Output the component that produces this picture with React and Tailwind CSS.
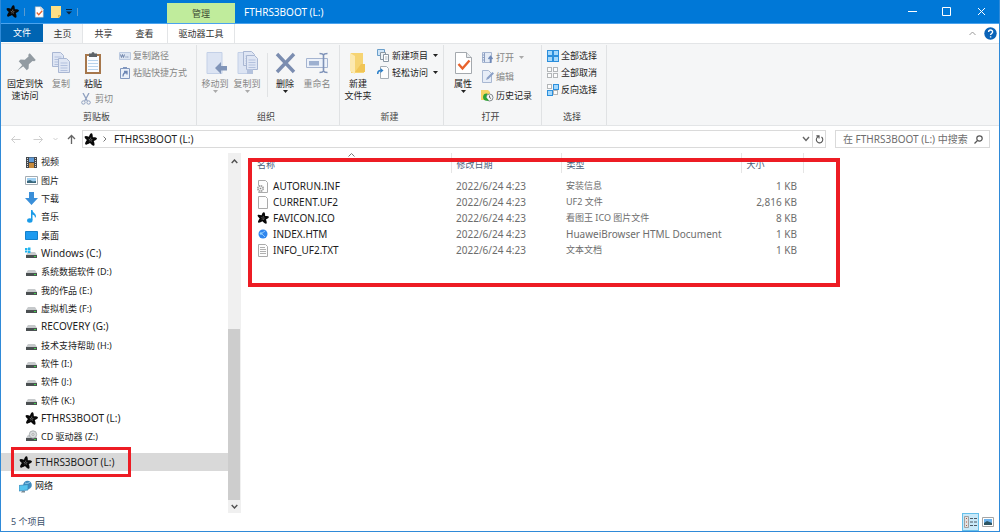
import { useState } from "react";

const cx = (...c) => c.filter(Boolean).join(" ");

/* ---------- icons ---------- */

function StarIcon({ className = "size-[13px]" }) {
  return (
    <svg viewBox="0 0 26 26" className={cx("shrink-0", className)}>
      <g transform="rotate(9 13 13)">
        <path
          d="M13 .5c2 0 3.200 3 3.900 7.300 4.600-.9 7.900-.8 8.500 1 .6 1.900-1.900 4-5.500 6.300 2.400 4 3.500 7.700 2 8.900-1.600 1.200-5-.6-8.900-3.700-3.700 3.200-7.100 5.100-8.700 3.900-1.600-1.200-.5-4.900 1.700-9.200C2.400 12.800 0 10.700.6 8.800c.6-1.800 3.900-1.900 8.500-1C9.800 3.500 11 .5 13 .5z"
          fill="#080808"
        />
        <path
          d="M13 9v3.500M9.300 12.800l2.700.8M16.700 12.600l-2.600 1M11.500 17l1-2.300M15.300 17l-1.200-2.300"
          stroke="#b5b5b5"
          strokeWidth="1"
          fill="none"
        />
      </g>
    </svg>
  );
}

function Caret({ className = "text-[#333]" }) {
  return (
    <svg viewBox="0 0 5 3" className={cx("h-[3px] w-[5px] shrink-0", className)}>
      <path d="M0 0h5L2.500 3z" fill="currentColor" />
    </svg>
  );
}

function FolderIcon({ className }) {
  return (
    <svg viewBox="0 0 24 24" className={className}>
      <path d="M5 2h12v16h1v4H5z" fill="#f6d473" />
      <path d="M15 13h4v8H9z" fill="#f1c555" />
      <path d="M4 2l5 3v18l-5-3z" fill="#fce9b0" />
    </svg>
  );
}

function PinIcon() {
  return (
    <svg viewBox="0 0 24 24" className="size-6">
      <g transform="rotate(48 12 12)" fill="#929ba2">
        <path d="M8 2h9v2l-1.500 1v5l3 3v2.500h-12V13l3-3V5L8 4z" />
        <path d="M11.600 15h1.800l-.9 8z" />
      </g>
    </svg>
  );
}

function Page({ x, y }) {
  return (
    <g transform={`translate(${x} ${y})`}>
      <path d="M.5.500h8l3 3v11H.5z" fill="#dfe6f4" stroke="#a9b7d3" />
      <path d="M2.500 5h7M2.500 7.500h7M2.500 10h7M2.500 12.500h7" stroke="#b3c1de" />
    </g>
  );
}

function CopyIcon() {
  return (
    <svg viewBox="0 0 24 24" className="size-6">
      <Page x={3} y={1} />
      <Page x={9} y={7} />
    </svg>
  );
}

function PasteIcon() {
  return (
    <svg viewBox="0 0 24 24" className="size-6">
      <path d="M4 3h16v20H4z" fill="#a6774c" />
      <path d="M6 5h12v16H6z" fill="#fafcff" />
      <path d="M8 2.500h2.500a1.500 1.500 0 013 0H16V6H8z" fill="#5d6368" />
      <path d="M7 9.500h10M7 12.500h10M7 15.500h10M7 18.500h10" stroke="#b8d3ec" />
    </svg>
  );
}

function ScissorsIcon() {
  return (
    <svg viewBox="0 0 10 12" className="h-3 w-[10px] shrink-0" fill="none" stroke="#8fa0bf">
      <path d="M2 0l4.300 8M8 0L3.700 8" strokeWidth="1.300" />
      <circle cx="2.400" cy="9.500" r="1.700" />
      <circle cx="7.600" cy="9.500" r="1.700" />
    </svg>
  );
}

function PathIcon() {
  return (
    <svg viewBox="0 0 12 12" className="size-3 shrink-0">
      <path d="M.5 2.500h11v7H.5z" fill="#dbe4f1" stroke="#bccae0" />
      <path d="M1.500 4.500l1 3 1-3 1 3 1-3M6.500 7h1M8.300 7h1" stroke="#6f84aa" fill="none" />
    </svg>
  );
}

function ShortcutIcon() {
  return (
    <svg viewBox="0 0 12 12" className="size-3 shrink-0">
      <path d="M1.500 1.500h9v10h-9z" fill="#eaf0f9" stroke="#8298bf" />
      <path d="M4 0h4v2H4z" fill="#8298bf" />
      <path d="M4 9.500c0-3 1-4 3.500-4M5 4.500h3v3" stroke="#6c86b4" fill="none" strokeWidth="1.300" />
    </svg>
  );
}

function MoveToIcon() {
  return (
    <svg viewBox="0 0 24 24" className="size-6">
      <path d="M4 1.500h15v21H4z" fill="#dce4f3" stroke="#c3d0e7" />
      <path d="M12 17l6-6v4h6v4.500h-6v3.500z" fill="#8094b8" />
    </svg>
  );
}

function CopyToIcon() {
  return (
    <svg viewBox="0 0 24 24" className="size-6">
      <path d="M3 1.500h13v21H3z" fill="#dce4f3" stroke="#c3d0e7" />
      <Page x={8} y={0} />
      <Page x={11} y={4} />
      <path d="M12 18h6v5h-6z" fill="#b4c2dd" />
    </svg>
  );
}

function DeleteIcon() {
  return (
    <svg viewBox="0 0 24 24" className="size-6">
      <path d="M4 3l17 18M21 3L4 21" stroke="#7b8db0" strokeWidth="3.400" />
    </svg>
  );
}

function RenameIcon() {
  return (
    <svg viewBox="0 0 24 24" className="size-6" fill="none">
      <path d="M1.500 7.500h21v9h-21z" fill="#edf2fa" stroke="#a5b4d0" />
      <path d="M4 10h10v4.500H4z" fill="#9db0d0" />
      <path d="M14.500 2.500c2 0 3.500.5 4 1.500.5-1 2-1.500 4-1.500M18.500 4v16M14.500 21.500c2 0 3.500-.5 4-1.500.5 1 2 1.500 4 1.500" stroke="#7e92b8" strokeWidth="1.600" />
    </svg>
  );
}

function NewItemIcon() {
  return (
    <svg viewBox="0 0 13 13" className="size-[13px] shrink-0" stroke="#8a97a3">
      <path d="M.5.500h7v6h-7z" fill="#cfe4f6" stroke="#6a9fca" />
      <path d="M3.500 3.500h5v7h-5z" fill="#eef3f8" />
      <path d="M6.500 5.500h5v7h-5z" fill="#fff" />
      <path d="M8 8h2.500M8 10h2.500" stroke="#aeb7c0" />
    </svg>
  );
}

function EasyAccessIcon() {
  return (
    <svg viewBox="0 0 13 13" className="size-[13px] shrink-0">
      <path d="M3.500.500h6l2 2v10h-8z" fill="#fdfdfd" stroke="#a6aeb5" />
      <path d="M.7 8c0-2.500 1-3.500 3-3.500" stroke="#2a7fc9" fill="none" strokeWidth="1.500" />
      <path d="M3.500 2l3 2.500-3 2.500z" fill="#2a7fc9" />
    </svg>
  );
}

function PropertiesIcon({ className = "size-6" }) {
  return (
    <svg viewBox="0 0 24 24" className={className}>
      <path d="M4.500 1.500h11l5 5v16h-16z" fill="#fff" stroke="#a4a9ae" />
      <path d="M15.500 1.500v5h5" fill="#e6e9ec" stroke="#a4a9ae" />
      <path d="M7.500 13l4 4.500 7-8" stroke="#e8622c" strokeWidth="2.400" fill="none" />
    </svg>
  );
}

function OpenIcon() {
  return (
    <svg viewBox="0 0 13 13" className="size-[13px] shrink-0">
      <path d="M1.500 1.500h9v10h-9z" fill="#e4ebf6" stroke="#a5b5d0" />
      <path d="M3.500 2v9M1.500 4h2M1.500 6.500h2M1.500 9h2" stroke="#8c9fc1" />
      <path d="M9.500 12V6M7.500 8l2-2.500 2 2.500" stroke="#6f89b8" fill="none" strokeWidth="1.500" />
    </svg>
  );
}

function EditIcon() {
  return (
    <svg viewBox="0 0 13 13" className="size-[13px] shrink-0">
      <path d="M1.500.500h6l3 3v9h-9z" fill="#e7edf7" stroke="#a9b8d2" />
      <path d="M5 10l1-2.500L11.500 2l1.500 1.500L7.500 9z" fill="#8ba0c6" />
    </svg>
  );
}

function HistoryIcon() {
  return (
    <svg viewBox="0 0 13 13" className="size-[13px] shrink-0">
      <path d="M0 1h7l2 2v8H0z" fill="#f5d464" />
      <circle cx="8.500" cy="8.500" r="3.500" fill="#f4f6f7" stroke="#84898d" />
      <path d="M8.500 6.500v2l1.500 1" stroke="#666" fill="none" />
      <path d="M2 8c.3-3 2-4 4.500-3.500L5 8l3 3.500C4 12.500 2 11 2 8z" fill="#2ca336" />
    </svg>
  );
}

function SelectIcon({ kind }) {
  const on = "#a5d8fb";
  const off = "#fcfcfc";
  const fills = {
    all: [on, on, on, on],
    none: [off, off, off, off],
    invert: [off, on, on, off],
  }[kind];
  const spots = [
    [1, 1],
    [7, 1],
    [1, 7],
    [7, 7],
  ];
  return (
    <svg viewBox="0 0 13 13" className="size-[13px] shrink-0">
      {spots.map(([x, y], i) => (
        <rect
          key={i}
          x={x + 0.5}
          y={y + 0.5}
          width={fills[i] === on ? 5 : 4}
          height={fills[i] === on ? 5 : 4}
          fill={fills[i]}
          stroke={fills[i] === on ? "#2c8fdc" : "#b3b6b8"}
        />
      ))}
    </svg>
  );
}

function DriveBody() {
  return (
    <>
      <path d="M3 5h7l2 3H1z" fill="#c6c9cb" />
      <path d="M1 8h11v3H1z" fill="#4b5052" />
      <path d="M9 9h2v1H9z" fill="#3fd04a" />
    </>
  );
}

function NavIcon({ kind }) {
  if (kind === "star") return <StarIcon />;
  return (
    <svg viewBox="0 0 13 13" className="size-[13px] shrink-0">
      {kind === "video" && (
        <>
          <path d="M1 1h11v11H1z" fill="#45484c" />
          <path d="M4 1.500h5v4.500H4z" fill="#5f9bd8" />
          <path d="M4 7h5v5H4z" fill="#c78a3b" />
          <path d="M2.500 2v9.500M10.500 2v9.500" stroke="#d6d6d6" strokeDasharray="1 1" />
        </>
      )}
      {kind === "image" && (
        <>
          <path d="M.5 2.500h12v8H.5z" fill="#fff" stroke="#a3acb3" />
          <path d="M2 4h9v5H2z" fill="#9fd0f2" />
          <path d="M2 7l3-1 3 1.500 3-.5v2H2z" fill="#39677c" />
        </>
      )}
      {kind === "download" && <path d="M4 0h5v6h4l-6.500 7L0 6h4z" fill="#3a8fd9" />}
      {kind === "music" && (
        <>
          <path d="M6 0h1.500c0 3 3.500 3 3.500 6.500L10 8c0-2.500-1-3-2.500-3.500V10H6z" fill="#1a9be8" />
          <ellipse cx="4.800" cy="10.500" rx="2.700" ry="2.200" fill="#1a9be8" />
        </>
      )}
      {kind === "desktop" && <path d="M.5 2.500h12v8H.5z" fill="#1e9bf0" stroke="#1480cb" />}
      {kind === "drive" && <DriveBody />}
      {kind === "windows" && (
        <>
          <DriveBody />
          <path d="M0 1h2.500v2H0zM3 .5h2.500V3H3zM0 3.500h2.500v2H0zM3 3.500h2.500V6H3z" fill="#20b4ee" />
        </>
      )}
      {kind === "cd" && (
        <>
          <DriveBody />
          <circle cx="8" cy="4.500" r="3.700" fill="#d9dcde" stroke="#9ea3a6" strokeWidth=".8" />
          <circle cx="8" cy="4.500" r="1" fill="#fff" stroke="#888" strokeWidth=".6" />
        </>
      )}
      {kind === "network" && (
        <>
          <circle cx="8.500" cy="5" r="4.300" fill="#3f8cc0" />
          <path d="M6 3c2 1 4 0 5-1" stroke="#9fd2ee" fill="none" />
          <path d="M0 5.500l9-1V10l-9 1z" fill="#56c3ee" stroke="#3784b4" strokeWidth=".7" />
          <path d="M3 11h3v1.500H2z" fill="#7b8b95" />
        </>
      )}
    </svg>
  );
}

function FileIcon({ kind }) {
  if (kind === "star") return <StarIcon className="size-3" />;
  if (kind === "html")
    return (
      <svg viewBox="0 0 12 12" className="size-3 shrink-0">
        <circle cx="6" cy="6" r="4.500" fill="#2f86ee" />
        <path d="M4.500 5.500L8 3M4.500 5.500L8 9" stroke="#8cc4fb" fill="none" />
        <circle cx="4" cy="5.500" r="1.300" fill="#8fd0ff" />
      </svg>
    );
  return (
    <svg viewBox="0 0 12 13" className="h-[13px] w-3 shrink-0">
      <path d="M1.500.500h7l2 2v10h-9z" fill="#fdfdfd" stroke="#aaa" />
      {kind === "text" && <path d="M3 3.500h5M3 5.500h6M3 7.500h6M3 9.500h6" stroke="#b0b0b0" />}
      {kind === "inf" && (
        <>
          <circle cx="3.500" cy="8.500" r="3.500" fill="#fdfdfd" />
          <circle cx="3.500" cy="8.500" r="2.700" fill="#eee" stroke="#999" strokeWidth="1.500" strokeDasharray="1.500 .6" />
          <circle cx="3.500" cy="8.500" r=".8" fill="#888" />
        </>
      )}
    </svg>
  );
}

/* ---------- ribbon ---------- */

function BigButton({ icon, lines, dim, caret, wide }) {
  return (
    <button
      type="button"
      className={cx(
        "flex flex-col items-center pt-[6px] text-[9px] leading-3 whitespace-nowrap",
        wide ? "w-10" : "w-8",
        dim ? "text-[#868686]" : "text-[#222]",
      )}
    >
      {icon}
      <span className="mt-[3px]">
        {lines.map((l) => (
          <span key={l} className="block">
            {l}
          </span>
        ))}
      </span>
      {caret && <Caret className={dim ? "text-[#aaa]" : "text-[#222]"} />}
    </button>
  );
}

function SmallButton({ icon, label, dim, caret, tall }) {
  return (
    <button
      type="button"
      className={cx(
        "flex items-center gap-px text-[9px] whitespace-nowrap",
        tall ? "h-[19px]" : "h-[17px]",
        dim ? "text-[#868686]" : "text-[#222]",
      )}
    >
      {icon}
      <span className="pl-px">{label}</span>
      {caret && (
        <span className="pl-1">
          <Caret className={dim ? "text-[#aaa]" : "text-[#222]"} />
        </span>
      )}
    </button>
  );
}

function RibbonGroup({ label, className, bodyClass, children }) {
  return (
    <section aria-label={label} className={cx("flex shrink-0 flex-col py-px", className)}>
      <div className="flex flex-1 flex-col border-r border-[#e0e2e4]">
        <div className={cx("flex h-16 items-start", bodyClass)}>{children}</div>
        <div className="pr-1 text-center text-[9px] leading-4 text-[#444]">{label}</div>
      </div>
    </section>
  );
}

function Ribbon() {
  return (
    <div className="flex h-[83px] border-y border-[#e3e5e7] bg-[#f5f6f7]">
      <RibbonGroup label="剪贴板" className="w-[196px]" bodyClass="pl-1">
        <BigButton icon={<PinIcon />} lines={["固定到快", "速访问"]} wide />
        <BigButton icon={<CopyIcon />} lines={["复制"]} dim />
        <div className="w-[42px]">
          <BigButton icon={<PasteIcon />} lines={["粘贴"]} />
          <button type="button" className="mt-[3px] flex items-center gap-1 pl-1 text-[9px] leading-3 whitespace-nowrap text-[#868686]">
            <ScissorsIcon />
            剪切
          </button>
        </div>
        <div className="pt-[2px]">
          <SmallButton icon={<PathIcon />} label="复制路径" dim />
          <SmallButton icon={<ShortcutIcon />} label="粘贴快捷方式" dim />
        </div>
      </RibbonGroup>

      <RibbonGroup label="组织" className="w-[143px]" bodyClass="pl-[2px]">
        <BigButton icon={<MoveToIcon />} lines={["移动到"]} dim caret />
        <BigButton icon={<CopyToIcon />} lines={["复制到"]} dim caret />
        <div className="mt-2 mr-px ml-1 h-11 w-px bg-[#e0e2e4]" />
        <BigButton icon={<DeleteIcon />} lines={["删除"]} caret />
        <BigButton icon={<RenameIcon />} lines={["重命名"]} dim />
      </RibbonGroup>

      <RibbonGroup label="新建" className="w-[104px]" bodyClass="pl-[2px]">
        <BigButton icon={<FolderIcon className="size-6" />} lines={["新建", "文件夹"]} />
        <div className="pt-[2px] pl-[3px]">
          <SmallButton icon={<NewItemIcon />} label="新建项目" caret />
          <SmallButton icon={<EasyAccessIcon />} label="轻松访问" caret />
        </div>
      </RibbonGroup>

      <RibbonGroup label="打开" className="w-[98px]" bodyClass="pl-[3px]">
        <BigButton icon={<PropertiesIcon />} lines={["属性"]} caret />
        <div className="pt-[3px] pl-[2px]">
          <SmallButton icon={<OpenIcon />} label="打开" dim caret tall />
          <SmallButton icon={<EditIcon />} label="编辑" dim tall />
          <SmallButton icon={<HistoryIcon />} label="历史记录" tall />
        </div>
      </RibbonGroup>

      <RibbonGroup label="选择" className="w-[65px]" bodyClass="pl-1">
        <div className="pt-[2px]">
          <SmallButton icon={<SelectIcon kind="all" />} label="全部选择" />
          <SmallButton icon={<SelectIcon kind="none" />} label="全部取消" />
          <SmallButton icon={<SelectIcon kind="invert" />} label="反向选择" />
        </div>
      </RibbonGroup>
    </div>
  );
}

/* ---------- window chrome ---------- */

function TitleBar() {
  return (
    <header className="flex h-6 items-stretch border-b border-[#4aa3ee] bg-[#0078d7]">
      <div className="flex w-[166px] shrink-0 items-center pl-[5px]">
        <StarIcon />
        <span className="ml-[5px] h-2 w-px bg-[#5b9bd0]" />
        <button type="button" aria-label="属性" className="ml-2">
          <PropertiesIcon className="size-3" />
        </button>
        <button type="button" aria-label="新建文件夹" className="ml-[5px]">
          <svg viewBox="0 0 12 12" className="size-3">
            <path d="M1 0h10v9l-2 3H1z" fill="#fbdf85" />
            <path d="M8 12V9h3z" fill="#d9b34d" />
          </svg>
        </button>
        <button type="button" aria-label="自定义快速访问工具栏" className="ml-1">
          <svg viewBox="0 0 6 6" className="size-[6px]">
            <path d="M0 .5h6" stroke="#0b2540" />
            <path d="M0 2.500h6L3 5.500z" fill="#0b2540" />
          </svg>
        </button>
        <span className="ml-[5px] h-2 w-px bg-[#5b9bd0]" />
      </div>
      <div className="mt-[3px] w-[68px] shrink-0 bg-[#c0ec9c] text-center text-[9px] leading-[22px] text-[#3c4a34]">管理</div>
      <h1 className="flex-1 pl-[9px] text-[10px] leading-6 text-white">FTHRS3BOOT (L:)</h1>
      <div className="flex text-white">
        <button type="button" aria-label="最小化" className="grid w-[34px] place-items-center">
          <svg viewBox="0 0 9 9" className="size-[9px]">
            <path d="M0 4.500h9" stroke="currentColor" />
          </svg>
        </button>
        <button type="button" aria-label="最大化" className="grid w-[34px] place-items-center">
          <svg viewBox="0 0 9 9" className="size-[9px]">
            <path d="M.5.500h8v8h-8z" stroke="currentColor" fill="none" />
          </svg>
        </button>
        <button type="button" aria-label="关闭" className="grid w-9 place-items-center">
          <svg viewBox="0 0 9 9" className="size-[9px]">
            <path d="M1 1l7 7M8 1L1 8" stroke="currentColor" />
          </svg>
        </button>
      </div>
    </header>
  );
}

function Tabs() {
  return (
    <nav className="flex h-[19px] items-stretch text-[9px] leading-[18px] text-[#333]">
      <button type="button" className="mb-px w-[42px] bg-[#0064b2] text-white">
        文件
      </button>
      <button type="button" className="w-10 border-r border-[#e3e5e7] bg-[#f5f6f7]">
        主页
      </button>
      <button type="button" className="w-[41px]">
        共享
      </button>
      <button type="button" className="w-[43px] pr-[2px]">
        查看
      </button>
      <button type="button" className="w-[68px] border-x border-[#e3e5e7]">
        驱动器工具
      </button>
      <span className="flex-1" />
      <button type="button" aria-label="折叠功能区" className="mr-2">
        <svg viewBox="0 0 7 5" className="h-[5px] w-[7px]" fill="none" stroke="#999">
          <path d="M.5 4l3-3 3 3" />
        </svg>
      </button>
      <button type="button" aria-label="帮助" className="mr-[2px]">
        <svg viewBox="0 0 13 13" className="size-[13px]" fill="none">
          <circle cx="6.500" cy="6.500" r="6.200" fill="#0a63b8" />
          <path d="M4.600 5c0-2.600 4-2.600 4 0 0 1.500-2 1.500-2 3M6.600 9.200v1.400" stroke="#fff" strokeWidth="1.400" />
        </svg>
      </button>
    </nav>
  );
}

function AddressRow() {
  const [query, setQuery] = useState("");

  return (
    <div className="flex items-center px-[9px] pt-1 pb-[5px]">
      <div className="flex w-[72px] shrink-0 items-center">
        <button type="button" aria-label="后退">
          <svg viewBox="0 0 11 9" className="h-[9px] w-[11px]" fill="none" stroke="#cfcfcf">
            <path d="M10.500 4.500H1.500M5 1L1.500 4.500 5 8" />
          </svg>
        </button>
        <button type="button" aria-label="前进" className="ml-3">
          <svg viewBox="0 0 11 9" className="h-[9px] w-[11px]" fill="none" stroke="#cfcfcf">
            <path d="M.5 4.500h9M6 1l3.500 3.500L6 8" />
          </svg>
        </button>
        <button type="button" aria-label="最近浏览的位置" className="ml-[9px]">
          <svg viewBox="0 0 5 4" className="h-1 w-[5px]" fill="none" stroke="#cfcfcf">
            <path d="M.5 1l2 2 2-2" />
          </svg>
        </button>
        <button type="button" aria-label="上移" className="ml-[9px]">
          <svg viewBox="0 0 9 10" className="h-[10px] w-[9px]" fill="none" stroke="#666" strokeWidth="1.300">
            <path d="M4.500 10V1.500M1 5l3.500-3.500L8 5" />
          </svg>
        </button>
      </div>

      <div className="flex h-[18px] flex-1 items-center border border-[#dadada] pl-px">
        <StarIcon />
        <svg viewBox="0 0 4 6" className="ml-[6px] h-[6px] w-1" fill="none" stroke="#777">
          <path d="M.5.500L3 3 .5 5.500" />
        </svg>
        <span className="flex-1 pl-[7px] text-[10px] leading-4 text-[#222]">FTHRS3BOOT (L:)</span>
        <button type="button" aria-label="以前的位置" className="px-[2px]">
          <svg viewBox="0 0 8 6" className="h-[6px] w-2" fill="none" stroke="#666" strokeWidth="1.400">
            <path d="M1 1l3 3.500L7 1" />
          </svg>
        </button>
        <button type="button" aria-label="刷新" className="grid h-4 w-[13px] place-items-center border-l border-[#dadada]">
          <svg viewBox="0 0 10 10" className="size-[9px]" fill="none" stroke="#555" strokeWidth="1.200">
            <path d="M7.200 2.200A3.600 3.600 0 115 1.500M1.500 1h3v3" />
          </svg>
        </button>
      </div>

      <div className="ml-[9px] flex h-[18px] w-[155px] items-center border border-[#dadada] pr-[6px] pl-[7px]">
        <input
          type="text"
          aria-label="搜索"
          value={query}
          onChange={(e) => setQuery(e.target.value)}
          placeholder="在 FTHRS3BOOT (L:) 中搜索"
          className="w-full min-w-0 text-[10px] leading-4 outline-none placeholder:text-[#6d6d6d]"
        />
        <svg viewBox="0 0 9 9" className="size-[9px] shrink-0" fill="none" stroke="#555" strokeWidth="1.200">
          <circle cx="5.500" cy="3.500" r="2.700" />
          <path d="M3.500 5.500L.5 8.500" />
        </svg>
      </div>
    </div>
  );
}

/* ---------- content ---------- */

const places = [
  { kind: "video", label: "视频" },
  { kind: "image", label: "图片" },
  { kind: "download", label: "下载" },
  { kind: "music", label: "音乐" },
  { kind: "desktop", label: "桌面" },
  { kind: "windows", label: "Windows (C:)", latin: true },
  { kind: "drive", label: "系统数据软件 (D:)" },
  { kind: "drive", label: "我的作品 (E:)" },
  { kind: "drive", label: "虚拟机类 (F:)" },
  { kind: "drive", label: "RECOVERY (G:)", latin: true },
  { kind: "drive", label: "技术支持帮助 (H:)" },
  { kind: "drive", label: "软件 (I:)" },
  { kind: "drive", label: "软件 (J:)" },
  { kind: "drive", label: "软件 (K:)" },
  { kind: "star", label: "FTHRS3BOOT (L:)", latin: true },
  { kind: "cd", label: "CD 驱动器 (Z:)" },
];

function Place({ kind, label, latin }) {
  return (
    <a
      href="#"
      className={cx(
        "flex h-[18px] items-center gap-[3px] whitespace-nowrap text-[#1c1c1c]",
        latin ? "text-[10px]" : "text-[9px]",
      )}
    >
      <NavIcon kind={kind} />
      {label}
    </a>
  );
}

function Sidebar() {
  return (
    <aside className="flex w-[240px] shrink-0 border-r border-[#f0f0f0]">
      <div className="flex min-w-0 flex-1 flex-col pb-[18px]">
        <ul className="flex flex-1 flex-col justify-between pl-6">
          {places.map((p) => (
            <li key={p.label}>
              <Place {...p} />
            </li>
          ))}
        </ul>
        <div className="relative mt-[7px] bg-[#d9d9d9] pl-[18px]">
          <Place kind="star" label="FTHRS3BOOT (L:)" latin />
          <div className="pointer-events-none absolute -inset-y-[6px] left-[10px] w-[120px] border-[3px] border-[#ed1c24]" />
        </div>
        <div className="mt-[6px] pl-[18px]">
          <Place kind="network" label="网络" />
        </div>
      </div>
      <div className="flex w-3 shrink-0 flex-col items-center bg-[#f0f0f0]">
        <svg viewBox="0 0 7 5" className="my-[6px] h-[5px] w-[7px]" fill="none" stroke="#505050" strokeWidth="1.400">
          <path d="M.7 4l2.800-3 2.800 3" />
        </svg>
        <div className="flex-1" />
        <div className="h-[171px] w-full bg-[#cdcdcd]" />
        <svg viewBox="0 0 7 5" className="my-1 h-[5px] w-[7px]" fill="none" stroke="#505050" strokeWidth="1.400">
          <path d="M.7 1l2.800 3 2.800-3" />
        </svg>
      </div>
    </aside>
  );
}

const files = [
  { kind: "inf", name: "AUTORUN.INF", type: "安装信息", size: "1 KB" },
  { kind: "blank", name: "CURRENT.UF2", type: "UF2 文件", size: "2,816 KB" },
  { kind: "star", name: "FAVICON.ICO", type: "看图王 ICO 图片文件", size: "8 KB" },
  { kind: "html", name: "INDEX.HTM", type: "HuaweiBrowser HTML Document", size: "1 KB", latin: true },
  { kind: "text", name: "INFO_UF2.TXT", type: "文本文档", size: "1 KB" },
];

function FileList() {
  return (
    <main className="relative min-w-0 flex-1">
      <table className="w-full table-fixed border-collapse text-left text-[10px] whitespace-nowrap text-[#6d6d6d]">
        <colgroup>
          <col className="w-[210px]" />
          <col className="w-[110px]" />
          <col className="w-[180px]" />
          <col className="w-[62px]" />
          <col />
        </colgroup>
        <thead>
          <tr className="h-5 text-[9px] text-[#4c607a]">
            <th className="relative border-r border-[#e5e5e5] p-0 pt-[3px] pl-4 font-normal">
              名称
              <svg viewBox="0 0 7 4" className="absolute top-0 left-[107px] h-1 w-[7px]" fill="none" stroke="#777">
                <path d="M.5 3.500l3-3 3 3" />
              </svg>
            </th>
            <th className="border-r border-[#e5e5e5] p-0 pt-[3px] pl-[5px] font-normal">修改日期</th>
            <th className="border-r border-[#e5e5e5] p-0 pt-[3px] pl-[5px] font-normal">类型</th>
            <th className="border-r border-[#e5e5e5] p-0 pt-[3px] pl-[5px] font-normal">大小</th>
            <td />
          </tr>
        </thead>
        <tbody className="before:block before:h-[5px]">
          {files.map((f) => (
            <tr key={f.name} className="h-4">
              <td className="p-0 pl-4">
                <span className="flex items-center gap-1 leading-4 text-[#1c1c1c]">
                  <FileIcon kind={f.kind} />
                  {f.name}
                </span>
              </td>
              <td className="p-0 pl-[5px] leading-4">2022/6/24 4:23</td>
              <td className={cx("p-0 pl-[5px] leading-4", !f.latin && "text-[9px]")}>{f.type}</td>
              <td className="p-0 pr-[6px] text-right leading-4">{f.size}</td>
              <td />
            </tr>
          ))}
        </tbody>
      </table>

      {/* highlight frame around the listing */}
      <div className="pointer-events-none absolute top-[5px] left-[7px] h-[129px] w-[592px] border-4 border-[#ed1c24]" />
    </main>
  );
}

function StatusBar() {
  return (
    <footer className="flex h-[18px] items-center pl-[10px] text-[9px] text-[#3a4f6b]">
      <span className="flex-1">5 个项目</span>
      <button type="button" aria-label="详细信息" className="grid h-[18px] w-[17px] place-items-center border border-[#66c0ea] bg-[#c9e9f9]">
        <svg viewBox="0 0 13 12" className="h-3 w-[13px]">
          <path d="M.5.500h4v11h-4z" fill="#e2e2e2" stroke="#a0a0a0" />
          <path d="M2 2.500h1M2 6h1M2 9.500h1" stroke="#b0573c" />
          <path d="M6 2.500h3M10 2.500h3M6 6h3M10 6h3M6 9.500h3M10 9.500h3" stroke="#4b5963" />
        </svg>
      </button>
      <button type="button" aria-label="大缩略图" className="mr-[5px] ml-[3px]">
        <svg viewBox="0 0 12 10" className="h-[10px] w-3">
          <path d="M.5.500h11v9H.5z" fill="#fff" stroke="#a5a5a5" />
          <path d="M2 2h8v6H2z" fill="#6ab1ec" />
          <path d="M2 6l3-2 5 2v2H2z" fill="#2c5461" />
        </svg>
      </button>
    </footer>
  );
}

export default function App() {
  return (
    <div className="flex min-h-screen flex-col border-x border-b border-[#2f8ad8] bg-white font-['Noto_Sans','Noto_Sans_CJK_SC',sans-serif]">
      <TitleBar />
      <Tabs />
      <Ribbon />
      <AddressRow />
      <div className="flex flex-1">
        <Sidebar />
        <FileList />
      </div>
      <StatusBar />
    </div>
  );
}
